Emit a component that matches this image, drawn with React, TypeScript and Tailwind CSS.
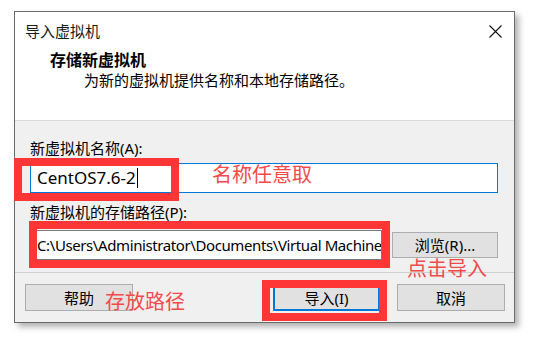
import React from "react";

const FONT = "font-['Noto_Sans','Noto_Sans_CJK_SC',sans-serif]";

export default function App() {
  return (
    <div className={`relative w-[556px] h-[338px] bg-white overflow-hidden ${FONT} text-black`}>
      <div className="pt-[11px] pl-[14px]">
        <div className="w-[501px] h-[312px] border border-[#6a6a6a] shadow-[4px_4px_6px_rgba(0,0,0,0.3)] flex flex-col bg-[#f0f0f0]">
          {/* header */}
          <div className="h-[108px] bg-white border-b border-[#dadada] box-content flex flex-col">
            <div className="h-[38px] flex items-center justify-between pl-[10px] pr-[12px]">
              <span className="text-[15px] leading-[20px] text-[#1a1a1a]">导入虚拟机</span>
              <svg width="13" height="13" viewBox="0 0 13 13" className="block">
                <path d="M0.5 0.5 L12.5 12.5 M12.5 0.5 L0.5 12.5" stroke="#111" strokeWidth="1.1" fill="none" />
              </svg>
            </div>
            <div className="pl-[35px] text-[16px] leading-[20px] font-bold">存储新虚拟机</div>
            <div className="pl-[69px] text-[15px] leading-[20px]">为新的虚拟机提供名称和本地存储路径。</div>
          </div>
          {/* body */}
          <div className="flex-1 flex flex-col pt-[17px]">
            <div className="pl-[15px] text-[15px] leading-[20px]">新虚拟机名称(A):</div>
            <div className="mt-[5px] ml-[15px] w-[468px] h-[30px] bg-white border border-[#0078d7] flex items-center pl-[6px] text-[17px]">
              <span className="leading-[20px]">CentOS7.6-2</span>
              <span className="w-px h-[20px] bg-black ml-[1px]" />
            </div>
            <div className="mt-[9px] pl-[15px] text-[15px] leading-[20px]">新虚拟机的存储路径(P):</div>
            <div className="mt-[8px] ml-[15px] flex items-center gap-[10px]">
              <div className="w-[352px] h-[30px] bg-white border border-[#7a7a7a] flex items-center pl-[6px] overflow-hidden whitespace-nowrap text-[15px] tracking-[-0.4px] leading-[20px]">
                <span className="whitespace-nowrap">C:\Users\Administrator\Documents\Virtual Machines</span>
              </div>
              <div className="w-[106px] h-[26px] bg-[#e1e1e1] border border-[#adadad] flex items-center justify-center text-[15px] leading-[20px]">
                浏览(R)...
              </div>
            </div>
            <div className="mt-[12px] h-px bg-[#cfcfcf]" />
            <div className="mt-[11px] flex items-center pl-[10px] pr-[9px]">
              <div className="w-[108px] h-[27px] bg-[#e1e1e1] border border-[#adadad] flex items-center justify-center text-[15px] leading-[20px]">
                帮助
              </div>
              <div className="ml-auto w-[107px] h-[27px] bg-[#e1e1e1] border-2 border-[#0078d7] flex items-center justify-center text-[15px] leading-[20px]">
                导入(I)
              </div>
              <div className="ml-[17px] w-[108px] h-[27px] bg-[#e1e1e1] border border-[#adadad] flex items-center justify-center text-[15px] leading-[20px]">
                取消
              </div>
            </div>
          </div>
        </div>
      </div>

      {/* annotations */}
      <div className="absolute left-[14px] top-[158px] w-[165px] h-[43px] border-[8px] border-[#fe3636]" />
      <div className="absolute left-[29px] top-[221px] w-[361px] h-[47px] border-[8px] border-[#fe3636]" />
      <div className="absolute left-[262px] top-[280px] w-[125px] h-[41px] border-[8px] border-[#fe3636]" />
      <div className="absolute left-[212px] top-[163px] text-[20px] leading-[24px] text-[#f34a4a]">名称任意取</div>
      <div className="absolute left-[407px] top-[257px] text-[20px] leading-[24px] text-[#f34a4a]">点击导入</div>
      <div className="absolute left-[105px] top-[290px] text-[20px] leading-[24px] text-[#f34a4a]">存放路径</div>
    </div>
  );
}
